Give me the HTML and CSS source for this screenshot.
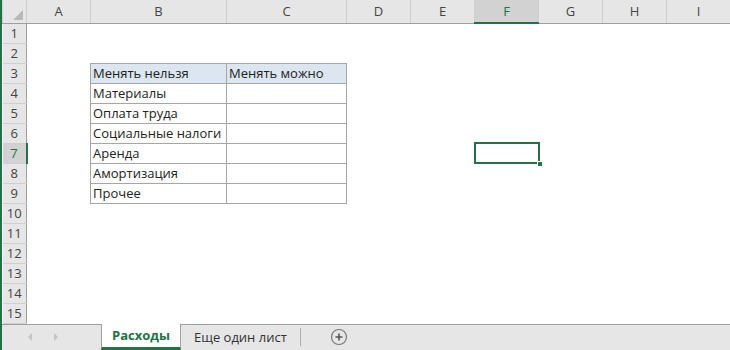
FILE: index.html
```html
<!DOCTYPE html>
<html lang="ru">
<head>
    <meta charset="UTF-8">
    <title>Расходы</title>
    <link rel="stylesheet" href="styles.css">
</head>
<body>
    <div class="window">
        <table class="sheet">
            <colgroup>
                <col class="col-head">
                <col class="col-a">
                <col class="col-b">
                <col class="col-c">
                <col class="col-std"><col class="col-std"><col class="col-std">
                <col class="col-std"><col class="col-std"><col class="col-std">
            </colgroup>
            <thead>
                <tr>
                    <th class="corner"><span class="corner-mark"></span></th>
                    <th>A</th><th>B</th><th>C</th><th>D</th><th>E</th>
                    <th class="active">F</th><th>G</th><th>H</th><th>I</th>
                </tr>
            </thead>
            <tbody>
                <tr><th>1</th><td></td><td></td><td></td><td></td><td></td><td></td><td></td><td></td><td></td></tr>
                <tr><th>2</th><td></td><td></td><td></td><td></td><td></td><td></td><td></td><td></td><td></td></tr>
                <tr><th>3</th><td></td><td class="t t-head">Менять нельзя</td><td class="t t-head">Менять можно</td><td></td><td></td><td></td><td></td><td></td><td></td></tr>
                <tr><th>4</th><td></td><td class="t">Материалы</td><td class="t"></td><td></td><td></td><td></td><td></td><td></td><td></td></tr>
                <tr><th>5</th><td></td><td class="t">Оплата труда</td><td class="t"></td><td></td><td></td><td></td><td></td><td></td><td></td></tr>
                <tr><th>6</th><td></td><td class="t">Социальные налоги</td><td class="t"></td><td></td><td></td><td></td><td></td><td></td><td></td></tr>
                <tr><th class="active">7</th><td></td><td class="t">Аренда</td><td class="t"></td><td></td><td></td><td class="selected"><span class="handle"></span></td><td></td><td></td><td></td></tr>
                <tr><th>8</th><td></td><td class="t">Амортизация</td><td class="t"></td><td></td><td></td><td></td><td></td><td></td><td></td></tr>
                <tr><th>9</th><td></td><td class="t">Прочее</td><td class="t"></td><td></td><td></td><td></td><td></td><td></td><td></td></tr>
                <tr><th>10</th><td></td><td></td><td></td><td></td><td></td><td></td><td></td><td></td><td></td></tr>
                <tr><th>11</th><td></td><td></td><td></td><td></td><td></td><td></td><td></td><td></td><td></td></tr>
                <tr><th>12</th><td></td><td></td><td></td><td></td><td></td><td></td><td></td><td></td><td></td></tr>
                <tr><th>13</th><td></td><td></td><td></td><td></td><td></td><td></td><td></td><td></td><td></td></tr>
                <tr><th>14</th><td></td><td></td><td></td><td></td><td></td><td></td><td></td><td></td><td></td></tr>
                <tr><th>15</th><td></td><td></td><td></td><td></td><td></td><td></td><td></td><td></td><td></td></tr>
            </tbody>
        </table>

        <div class="tabbar">
            <div class="nav">
                <span class="arrow arrow-left"></span>
                <span class="arrow arrow-right"></span>
            </div>
            <div class="tab tab-active">Расходы</div>
            <div class="tab">Еще один лист</div>
            <div class="add-sheet">
                <svg width="18" height="18" viewBox="0 0 18 18">
                    <circle cx="9" cy="9" r="7.5" fill="none" stroke="#777" stroke-width="1.2"/>
                    <path d="M9 5.5v7M5.5 9h7" stroke="#555" stroke-width="1.6"/>
                </svg>
            </div>
        </div>
    </div>
</body>
</html>
```

FILE: styles.css
```css
* {
    margin: 0;
    padding: 0;
    box-sizing: border-box;
}

body {
    font-family: "Open Sans", "Noto Sans", sans-serif;
    background: #fff;
    width: 730px;
    height: 350px;
    overflow: hidden;
}

.window {
    border-left: 2px solid #217346;
    height: 350px;
    display: flex;
    flex-direction: column;
}

.sheet {
    border-collapse: collapse;
    table-layout: fixed;
    width: 728px;
}

.col-head { width: 24px; }
.col-a { width: 64px; }
.col-b { width: 136px; }
.col-c { width: 120px; }
.col-std { width: 64px; }

.sheet th,
.sheet td {
    height: 20px;
    padding: 0;
    white-space: nowrap;
    overflow: hidden;
}

.sheet th {
    background: #e6e6e6;
    color: #444;
    font-weight: normal;
    font-size: 13px;
    text-align: center;
    border: 1px solid #cfcfcf;
}

.sheet thead th {
    height: 23px;
    border-top: none;
    border-bottom: 1px solid #9f9f9f;
}

.sheet tbody th {
    border-left: none;
    border-right: 1px solid #9f9f9f;
}

.sheet thead th.active {
    background: #d2d2d2;
    color: #217346;
    border-bottom: 2px solid #217346;
}

.sheet tbody th.active {
    background: #d2d2d2;
    color: #217346;
    border-right: 2px solid #217346;
}

.corner {
    position: relative;
}

.corner-mark {
    position: absolute;
    right: 3px;
    bottom: 3px;
    width: 0;
    height: 0;
    border-left: 10px solid transparent;
    border-bottom: 10px solid #b8b8b8;
}

.sheet td {
    font-size: 13px;
    color: #222;
    padding-left: 2px;
    border: none;
}

.sheet td.t {
    border: 1px solid #a6a6a6;
}

.sheet td.t-head {
    background: #dce6f1;
}

.sheet td.selected {
    position: relative;
    overflow: visible;
    outline: 2px solid #217346;
    outline-offset: -1px;
}

.handle {
    position: absolute;
    right: -4px;
    bottom: -4px;
    width: 6px;
    height: 6px;
    background: #217346;
    border: 1px solid #fff;
}

.tabbar {
    flex: 1;
    display: flex;
    align-items: stretch;
    background: #e6e6e6;
    border-top: 1px solid #9f9f9f;
}

.nav {
    width: 99px;
    display: flex;
    align-items: center;
    gap: 22px;
    padding-left: 26px;
}

.arrow {
    width: 0;
    height: 0;
    border-top: 4px solid transparent;
    border-bottom: 4px solid transparent;
}

.arrow-left { border-right: 4px solid #c4c4c4; }
.arrow-right { border-left: 4px solid #c4c4c4; }

.tab {
    font-size: 13px;
    color: #333;
    padding: 0 13px;
    display: flex;
    align-items: center;
    border-right: 1px solid #b0b0b0;
    margin: 3px 0 4px;
}

.tab-active {
    background: #fff;
    color: #217346;
    font-weight: bold;
    width: 80px;
    justify-content: center;
    margin: -1px 0 0;
    border-left: 1px solid #a0a0a0;
    border-right: 1px solid #a0a0a0;
    border-bottom: 3px solid #217346;
}

.add-sheet {
    display: flex;
    align-items: center;
    margin-left: 29px;
}
```
